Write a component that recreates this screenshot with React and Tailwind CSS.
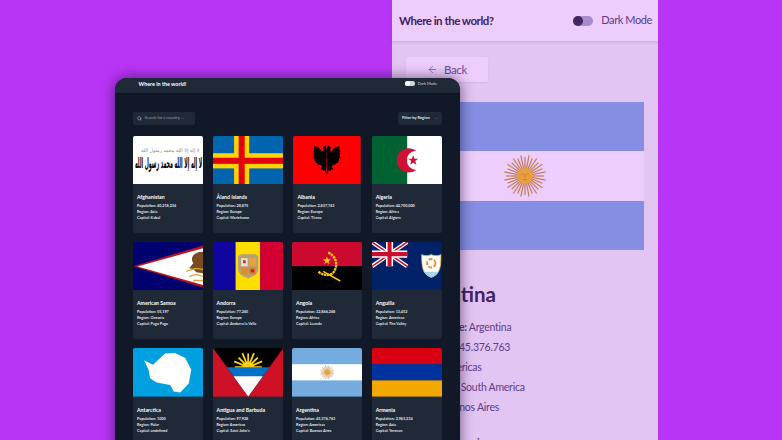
import { ArrowLeft, ChevronDown, Search } from "lucide-react";

const font = { fontFamily: 'Lato, "Noto Sans", sans-serif' };

function Sun({ cx, cy, r, rays = 32, ray = "#c4825c", face = "#e8a23a", width = 0.5, features }) {
  const lines = Array.from({ length: rays }, (_, i) => (i * Math.PI * 2) / rays);
  return (
    <g>
      {lines.map((a, i) => (
        <line
          key={i}
          x1={cx}
          y1={cy}
          x2={cx + Math.cos(a) * (i % 2 ? r : r * 0.9)}
          y2={cy + Math.sin(a) * (i % 2 ? r : r * 0.9)}
          stroke={ray}
          strokeWidth={width}
        />
      ))}
      <circle cx={cx} cy={cy} r={r * 0.38} fill={face} />
      {features && (
        <path
          d={`M${cx - 4} ${cy - 2}h2.500M${cx + 1.500} ${cy - 2}h2.500M${cx} ${cy - 2}v3.500M${cx - 2} ${cy + 3.500}h4`}
          stroke={ray}
          strokeWidth="0.900"
          fill="none"
        />
      )}
    </g>
  );
}

function FlagSvg({ children }) {
  return (
    <svg viewBox="0 0 70 48" preserveAspectRatio="none" className="block h-[48.6px] w-full">
      {children}
    </svg>
  );
}

function Afghanistan() {
  return (
    <FlagSvg>
      <rect width="70" height="48" fill="#fff" />
      <text x="66" y="16" fontSize="5" fill="#8a8a8a" textAnchor="start" textLength="58" lengthAdjust="spacingAndGlyphs" direction="rtl" style={{ fontFamily: '"DejaVu Sans"' }}>
        لا إله إلا الله محمد رسول الله
      </text>
      <text x="69" y="32" fontSize="14" fontWeight="700" fill="#000" textAnchor="start" textLength="67" lengthAdjust="spacingAndGlyphs" direction="rtl" style={{ fontFamily: '"DejaVu Sans"' }}>
        لا إله إلا الله محمد رسول الله
      </text>
    </FlagSvg>
  );
}

function Aland() {
  return (
    <FlagSvg>
      <rect width="70" height="48" fill="#0064ae" />
      <rect x="21" width="15" height="48" fill="#ffd300" />
      <rect y="17" width="70" height="15" fill="#ffd300" />
      <rect x="25.500" width="6" height="48" fill="#e2000f" />
      <rect y="21.500" width="70" height="6" fill="#e2000f" />
    </FlagSvg>
  );
}

function Albania() {
  const half = "M35 12.500l1.500-3 2.500 1.500-.5 3 1.500 1.500 3-4 5-1.500 .5 2-1 1.500 1.500 1.500-1 1.500 1 1.500-1 1.500 1 1.500-1.500 1.500 .5 1.500-1.500 1 .5 1.500-2 .5-1 1.500-2.500 0-1.500 1.500 2 3.500-2.500-1-.5 2-2-1-1.500 5z";
  return (
    <FlagSvg>
      <rect width="70" height="48" fill="#ff0000" />
      <path d={half} fill="#000" />
      <path d={half} fill="#000" transform="translate(70 0) scale(-1 1)" />
    </FlagSvg>
  );
}

function Algeria() {
  return (
    <FlagSvg>
      <rect width="35" height="48" fill="#006233" />
      <rect x="35" width="35" height="48" fill="#fff" />
      <path d="M44 14.500A12 12 0 1 0 44 33.500A9.500 9.500 0 1 1 44 14.500z" fill="#d21034" />
      <path d="M41 19l1.300 3.500 3.700 0-3 2.300 1.100 3.700-3.100-2.200-3.100 2.200 1.100-3.700-3-2.300 3.700 0z" fill="#d21034" />
    </FlagSvg>
  );
}

function AmericanSamoa() {
  return (
    <FlagSvg>
      <rect width="70" height="48" fill="#00006e" />
      <path d="M70 3.300L0 24l70 21z" fill="#bd1021" />
      <path d="M70 6L4.500 24.200 70 42.500z" fill="#fff" />
      <path d="M70 10c-3-1-6 0-9 2-3 3-3 6-1 9l-4 5 4 1 3 3 7 1z" fill="#7a4a22" />
      <path d="M53 29l9-3 8 1M56 34l7-2 7 2M60 38l10 0" stroke="#d9a92c" strokeWidth="1.300" fill="none" />
    </FlagSvg>
  );
}

function Andorra() {
  return (
    <FlagSvg>
      <rect width="22.500" height="48" fill="#10069f" />
      <rect x="22.500" width="24.500" height="49" fill="#fedd00" />
      <rect x="47" width="23" height="48" fill="#d50032" />
      <path d="M25 14l3-2h14l3 2v13c0 5-5 7-10 9-5-2-10-4-10-9z" fill="#b5a078" />
      <rect x="28" y="16" width="6.500" height="8" fill="#e9e2d0" />
      <rect x="36" y="16" width="6.500" height="8" fill="#e9a13c" />
      <rect x="28" y="25" width="6.500" height="7" fill="#e38b2c" />
      <rect x="36" y="25" width="6.500" height="7" fill="#d9812a" />
      <rect x="30" y="18" width="2.500" height="3" fill="#c8202f" />
      <rect x="37.500" y="27" width="3.500" height="3" fill="#c8202f" />
    </FlagSvg>
  );
}

function Angola() {
  return (
    <FlagSvg>
      <rect width="70" height="24" fill="#cc092f" />
      <rect y="24" width="70" height="24" fill="#000" />
      <path d="M36 10.500c7 2.500 11 12 5 20-4 3.500-11 2.500-15-1.500" fill="none" stroke="#ffcb00" strokeWidth="2.300" strokeDasharray="2.500 .6" />
      <path d="M31 29l17 9.500" stroke="#ffcb00" strokeWidth="1.500" />
      <path d="M34.700 14l1 3 3.100 0-2.500 1.900 1 3-2.600-1.900-2.600 1.900 1-3-2.500-1.900 3.100 0z" fill="#ffcb00" />
    </FlagSvg>
  );
}

function Anguilla() {
  return (
    <FlagSvg>
      <rect width="70" height="48" fill="#012169" />
      <path d="M0 0l35 24M35 0L0 24" stroke="#fff" strokeWidth="4" />
      <path d="M0 0l35 24M35 0L0 24" stroke="#c8102e" strokeWidth="1.500" />
      <path d="M17.500 0v24M0 12h35" stroke="#fff" strokeWidth="7" />
      <path d="M17.500 0v24M0 12h35" stroke="#c8102e" strokeWidth="4" />
      <path d="M49.500 12.500c3 1.500 6 1.500 9.500 0 3.500 1.500 6.500 1.500 9.500 0 0 12-.5 19-9.500 22.500-9-3.500-9.500-10.500-9.500-22.500z" fill="#fff" stroke="#e9c46a" strokeWidth=".8" />
      <path d="M52 29.500h14c-1.500 3-3.500 4.500-7 5.500-3.500-1-5.500-2.500-7-5.500z" fill="#a8d4ea" />
      <circle cx="59" cy="21" r="4.200" fill="none" stroke="#f08a24" strokeWidth="1.800" strokeDasharray="4 1.500" />
    </FlagSvg>
  );
}

function Antarctica() {
  return (
    <FlagSvg>
      <rect width="70" height="48" fill="#009fdf" />
      <path
        d="M11 12l9 4.500 7-6.500 5-4.500 10-.5 10 5 6 11.500-2.500 13.500-8.500 9-6.500-1-3.500-6.500-13.500-2.500-6.500-4-1.500-8.500z"
        fill="#fff"
      />
    </FlagSvg>
  );
}

function Antigua() {
  return (
    <FlagSvg>
      <rect width="70" height="48" fill="#ce1126" />
      <path d="M0 0h70L35 48z" fill="#000" />
      <Sun cx={35} cy={19} r={15} rays={16} ray="#fcd116" width={1.800} face="#fcd116" />
      <path d="M13.800 19h42.400L35 48z" fill="#0072c6" />
      <path d="M20.500 28h29L35 48z" fill="#fff" />
    </FlagSvg>
  );
}

function Argentina() {
  return (
    <FlagSvg>
      <rect width="70" height="48" fill="#74acdf" />
      <rect y="16" width="70" height="16" fill="#fff" />
      <Sun cx={35} cy={24} r={7} rays={24} ray="#d9b98c" face="#e3a53c" width={0.900} />
    </FlagSvg>
  );
}

function Armenia() {
  return (
    <FlagSvg>
      <rect width="70" height="16" fill="#d90012" />
      <rect y="16" width="70" height="16" fill="#0033a0" />
      <rect y="32" width="70" height="16" fill="#f2a800" />
    </FlagSvg>
  );
}

const countries = [
  { name: "Afghanistan", population: "40,218,234", region: "Asia", capital: "Kabul", Flag: Afghanistan },
  { name: "Åland Islands", population: "28,875", region: "Europe", capital: "Mariehamn", Flag: Aland },
  { name: "Albania", population: "2,837,743", region: "Europe", capital: "Tirana", Flag: Albania, narrow: true },
  { name: "Algeria", population: "44,700,000", region: "Africa", capital: "Algiers", Flag: Algeria },
  { name: "American Samoa", population: "55,197", region: "Oceania", capital: "Pago Pago", Flag: AmericanSamoa },
  { name: "Andorra", population: "77,265", region: "Europe", capital: "Andorra la Vella", Flag: Andorra },
  { name: "Angola", population: "32,866,268", region: "Africa", capital: "Luanda", Flag: Angola },
  { name: "Anguilla", population: "13,452", region: "Americas", capital: "The Valley", Flag: Anguilla },
  { name: "Antarctica", population: "1000", region: "Polar", capital: "undefined", Flag: Antarctica },
  { name: "Antigua and Barbuda", population: "97,928", region: "Americas", capital: "Saint John's", Flag: Antigua },
  { name: "Argentina", population: "45,376,763", region: "Americas", capital: "Buenos Aires", Flag: Argentina },
  { name: "Armenia", population: "2,963,234", region: "Asia", capital: "Yerevan", Flag: Armenia },
];

function CountryCard({ country }) {
  const { Flag } = country;
  return (
    <article className={`h-[97px] overflow-hidden rounded-[2px] bg-[#1f2937] text-[#e5e7eb] ${country.narrow ? "mx-[1.4px]" : ""}`}>
      <Flag />
      <div className="px-[4px] pt-[10px]">
        <h2 className="text-[5.2px] leading-[7px] font-bold text-white">{country.name}</h2>
        <div className="mt-[2px] text-[3.75px] leading-[5.9px] font-bold">
          <p>Population: {country.population}</p>
          <p>Region: {country.region}</p>
          <p>Capital: {country.capital}</p>
        </div>
      </div>
    </article>
  );
}

function DarkWindow() {
  return (
    <section className="absolute top-[78px] left-[115px] h-[380px] w-[345px] overflow-hidden rounded-t-[12px] bg-[#111827] shadow-[0_0_14px_rgba(20,10,40,0.6)]">
      <header className="flex h-[14.500px] items-center justify-between bg-[#1f2937] pr-[23px] pl-[23.500px] shadow-sm">
        <span className="-mt-[3px] text-[5.400px] font-bold text-white">Where in the world!</span>
        <div className="-mt-[3px] flex items-center gap-[2.500px]">
          <span className="flex h-[5px] w-[10.500px] items-center rounded-full bg-[#d1d5db]">
            <span className="h-[5px] w-[5px] rounded-full bg-white" />
          </span>
          <span className="text-[3.900px] text-[#d1d5db]">Dark Mode</span>
        </div>
      </header>
      <div className="px-[18px] pt-[19px]">
        <div className="flex items-center justify-between">
          <div className="flex h-[13.500px] w-[62px] items-center gap-[3px] rounded-[2px] bg-[#1f2937] pl-[3.500px] text-[4px] text-[#9ca3af]">
            <Search size={5} strokeWidth={2} className="text-[#d1d5db]" />
            <span>Search for a country ...</span>
          </div>
          <div className="flex h-[13.500px] w-[44px] items-center justify-between rounded-[2px] bg-[#1f2937] pr-[3.500px] pl-[4px] text-[4px] font-bold text-[#e5e7eb]">
            <span>Filter by Region</span>
            <ChevronDown size={5} strokeWidth={1.500} className="text-[#9ca3af]" />
          </div>
        </div>
        <div className="mt-[10.500px] grid grid-cols-4 gap-x-[9.200px] gap-y-[9.300px]">
          {countries.map((c) => (
            <CountryCard key={c.name} country={c} />
          ))}
        </div>
      </div>
    </section>
  );
}

function LightWindow() {
  return (
    <section className="absolute top-0 left-[392px] h-[470px] w-[266px] bg-[#e3c5f4] text-[#5b3d88]">
      <header className="flex h-[41px] items-center justify-between bg-[#edcdfc] pr-[6px] pl-[7px] shadow-[0_1px_3px_rgba(80,40,120,0.2)]">
        <span className="text-[11.500px] font-bold tracking-[-0.5px] text-[#3f2168]">Where in the world?</span>
        <div className="flex items-center gap-[8px]">
          <span className="flex h-[10px] w-[20px] items-center rounded-full bg-[#a98bd0]">
            <span className="h-[10px] w-[10px] rounded-full bg-[#43255f]" />
          </span>
          <span className="text-[11px] tracking-[-0.4px] text-[#5b3d88]">Dark Mode</span>
        </div>
      </header>
      <div className="px-[14px] pt-[16px]">
        <button className="flex h-[25px] w-[82px] items-center justify-center gap-[6px] rounded-[2px] bg-[#edcdfc] text-[11.500px] tracking-[-0.4px] text-[#6a4a98] shadow-[0_1px_2px_rgba(80,40,120,0.1)]">
          <ArrowLeft size={11} strokeWidth={1.500} />
          Back
        </button>
        <svg viewBox="0 0 238 148" className="mt-[20px] block h-[148px] w-[238px]">
          <rect width="238" height="148" fill="#858ee2" />
          <rect y="49" width="238" height="50" fill="#edcdfc" />
          <Sun cx={119} cy={74} r={21} rays={32} ray="#c07a58" face="#e89f3a" width={1.200} features />
        </svg>
        <h1 className="mt-[30px] text-[20.500px] leading-[28px] font-bold text-[#3f2168]">Argentina</h1>
        <div className="mt-[9px] text-[10.500px] leading-[20px] tracking-[-0.25px]">
          <p><b className="font-bold">Native Name:</b> Argentina</p>
          <p><b className="font-bold">Population:</b> 45.376.763</p>
          <p><b className="font-bold">Region:</b> Americas</p>
          <p><b className="font-bold">Sub Region:</b> South America</p>
          <p><b className="font-bold">Capital:</b> Buenos Aires</p>
          <p className="mt-[16px]"><b className="font-bold">Top Level Domain:</b> .ar</p>
        </div>
      </div>
    </section>
  );
}

export default function App() {
  return (
    <div className="relative h-[440px] w-[782px] overflow-hidden bg-[#b935f5]" style={font}>
      <LightWindow />
      <DarkWindow />
    </div>
  );
}
